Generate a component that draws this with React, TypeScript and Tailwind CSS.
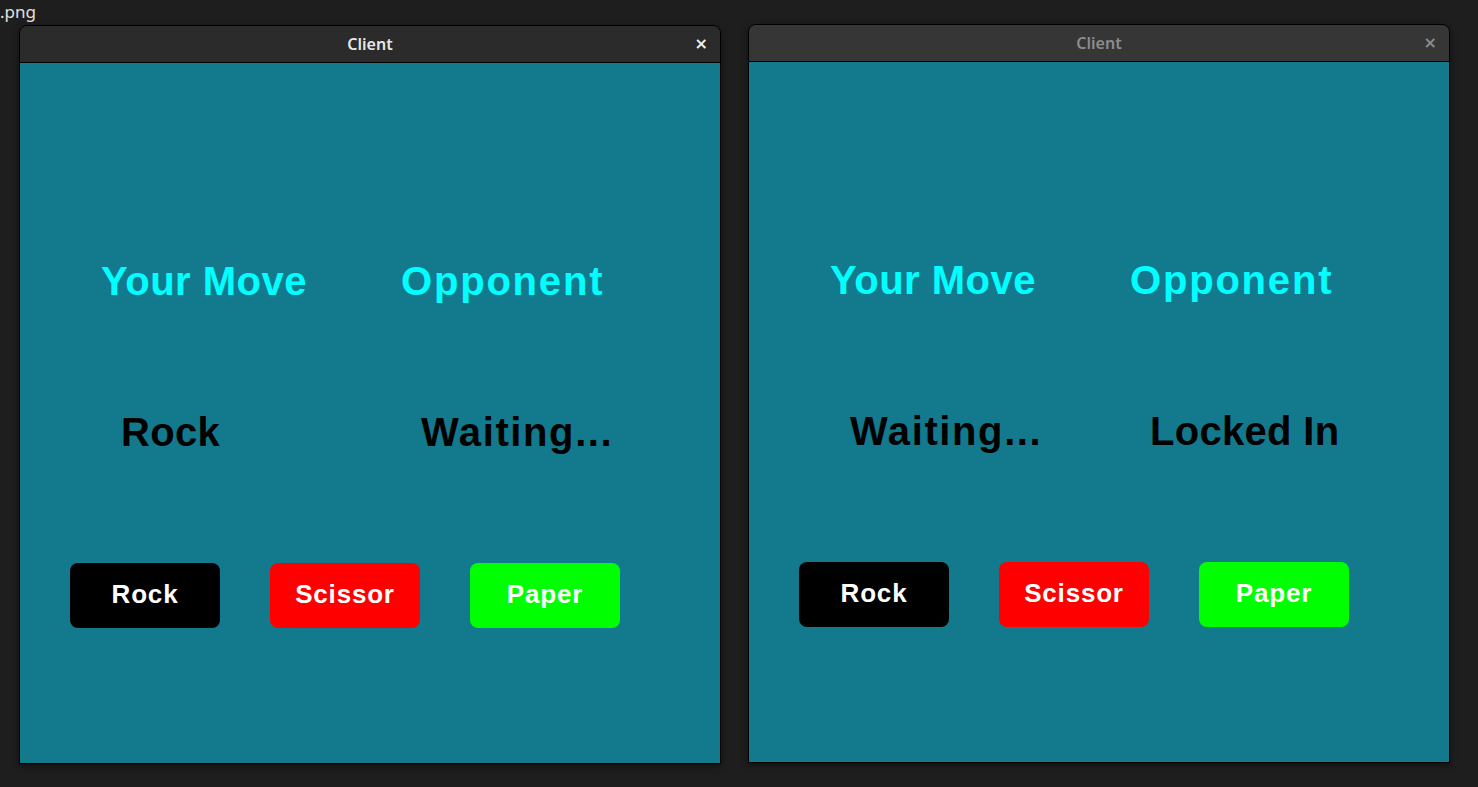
import React from "react";

const sans = { fontFamily: '"Liberation Sans", Arial, sans-serif' };

function Win({
  active,
  left,
  right,
  leftTrack,
  rightTrack,
  extraTop,
}: {
  active: boolean;
  left: string;
  right: string;
  leftTrack: string;
  rightTrack: string;
  extraTop: boolean;
}) {
  return (
    <div
      className={`w-[702px] border border-black rounded-t-[8px] shadow-[0_2px_6px_rgba(0,0,0,0.5)] ${
        extraTop ? "mt-[1px]" : ""
      }`}
    >
      <div
        className={`relative h-[37px] rounded-t-[7px] border-b border-black flex items-center justify-center ${
          active ? "bg-[#2b2b2b]" : "bg-[#363636]"
        }`}
      >
        <span
          className={`text-[16px] font-semibold ${active ? "text-[#e6e6e6]" : "text-[#8c8c8c]"}`}
          style={{ fontFamily: '"Noto Sans", "Open Sans", sans-serif' }}
        >
          Client
        </span>
        <span
          className={`absolute right-[12px] top-[8px] text-[16px] font-bold leading-[20px] ${
            active ? "text-[#f0f0f0]" : "text-[#8c8c8c]"
          }`}
          style={{ fontFamily: '"DejaVu Sans", sans-serif' }}
        >
          ×
        </span>
      </div>
      <div className="h-[700px] bg-[#137a8e] pt-[198px]" style={sans}>
        <div className="grid grid-cols-[300px_1fr] pl-[81px]">
          <div className="text-[40px] leading-[40px] font-bold text-[#00ffff] tracking-[0.5px]">
            Your Move
          </div>
          <div className="text-[40px] leading-[40px] font-bold text-[#00ffff] tracking-[1.8px]">
            Opponent
          </div>
        </div>
        <div className="grid grid-cols-[300px_1fr] pl-[101px] mt-[111px]">
          <div className={`text-[40px] leading-[40px] font-bold text-black ${leftTrack}`}>{left}</div>
          <div className={`text-[40px] leading-[40px] font-bold text-black ${rightTrack}`}>{right}</div>
        </div>
        <div className="flex gap-[50px] pl-[50px] mt-[111px]">
          <div className="w-[150px] h-[65px] pb-[3px] rounded-[8px] bg-black flex items-center justify-center text-white font-bold text-[26px] tracking-[0.8px]">
            Rock
          </div>
          <div className="w-[150px] h-[65px] pb-[3px] rounded-[8px] bg-[#ff0000] flex items-center justify-center text-white font-bold text-[26px] tracking-[0.8px]">
            Scissor
          </div>
          <div className="w-[150px] h-[65px] pb-[3px] rounded-[8px] bg-[#00ff00] flex items-center justify-center text-white font-bold text-[26px] tracking-[0.8px]">
            Paper
          </div>
        </div>
      </div>
    </div>
  );
}

export default function App() {
  return (
    <div className="relative w-[1478px] h-[787px] bg-[#1e1e1e] overflow-hidden">
      <div
        className="absolute left-0 top-[2px] text-[17px] leading-[20px] text-[#e0e0e0]"
        style={{ fontFamily: '"Noto Sans", "DejaVu Sans", sans-serif' }}
      >
        .png
      </div>
      <div className="flex items-start gap-[27px] pl-[19px] pt-[24px]">
        <Win
          active={true}
          left="Rock"
          right="Waiting..."
          leftTrack="tracking-[0.3px]"
          rightTrack="tracking-[1.6px]"
          extraTop={true}
        />
        <Win
          active={false}
          left="Waiting..."
          right="Locked In"
          leftTrack="tracking-[1.6px]"
          rightTrack="tracking-[0.3px]"
          extraTop={false}
        />
      </div>
    </div>
  );
}
